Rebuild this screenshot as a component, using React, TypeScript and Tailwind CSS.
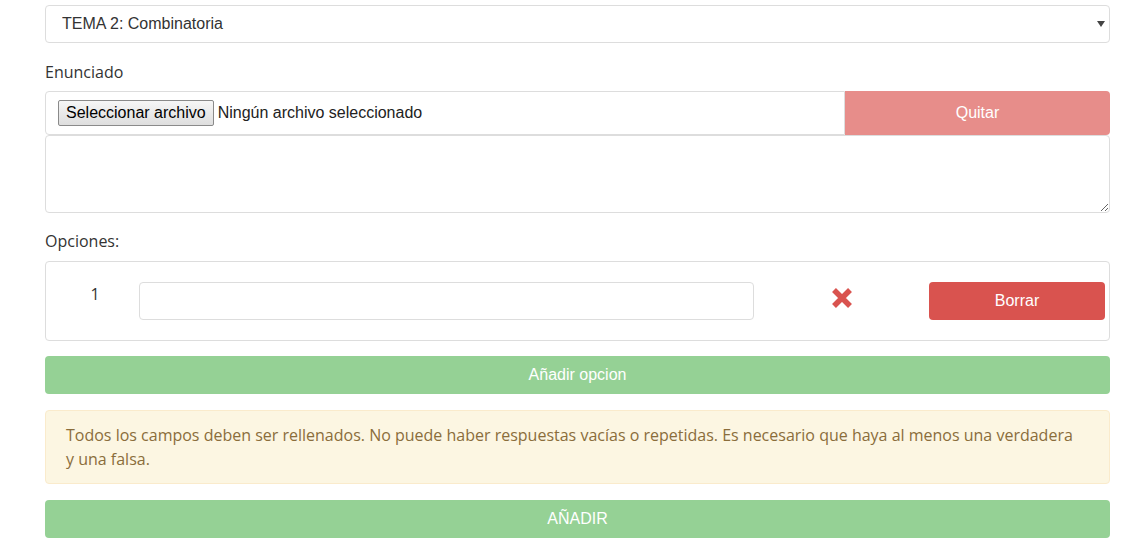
import React from 'react';

const sans = { fontFamily: '"Liberation Sans", Arial, sans-serif' };

const RemoveIcon = () => (
    <svg width="24" height="22" viewBox="0 0 24 22">
        <path d="M4 3 L20 19 M20 3 L4 19" stroke="#d9534f" strokeWidth="5.5" strokeLinecap="butt" />
    </svg>
);

const App = () => {
    return (
        <div className="w-[1146px] min-h-[559px] bg-white font-['Open_Sans',sans-serif] text-[#333]">
            <div className="ml-[45px] w-[1065px] pt-[5px]">
                <div className="relative">
                    <select
                        className="block h-[38px] w-full appearance-none rounded-[4px] border border-[#ddd] bg-white pl-[16px] text-[16px] text-[#333] outline-none"
                        style={sans}
                        defaultValue="t2"
                    >
                        <option value="t2">TEMA 2: Combinatoria</option>
                    </select>
                    <svg className="absolute right-[5px] top-[15px]" width="8" height="8" viewBox="0 0 8 8">
                        <path d="M0 1 L8 1 L4 7 Z" fill="#444" />
                    </svg>
                </div>

                <p className="mt-[17px] h-[24px] text-[16px] leading-[24px]">Enunciado</p>

                <div className="mt-[7px] flex h-[44px]">
                    <div className="flex flex-1 items-center rounded-l-[4px] border border-[#ddd] pl-[12px]" style={sans}>
                        <span className="flex h-[26px] items-center rounded-[2px] border border-[#8a8a8a] bg-gradient-to-b from-[#f6f6f6] to-[#dedede] px-[7px] text-[16px] text-black">
                            Seleccionar archivo
                        </span>
                        <span className="ml-[4px] text-[16px] text-[#222]">Ningún archivo seleccionado</span>
                    </div>
                    <button className="w-[265px] rounded-r-[4px] bg-[#e78d8a] text-[16px] text-white" style={sans}>
                        Quitar
                    </button>
                </div>

                <textarea className="block h-[78px] w-full rounded-[4px] border border-[#ddd] outline-none" />

                <p className="mt-[16px] h-[24px] text-[16px] leading-[24px]">Opciones:</p>

                <div className="mt-[8px] flex h-[80px] items-start rounded-[4px] border border-[#ddd] pt-[20px]">
                    <div className="w-[93px] pl-[5px] text-center text-[16px] leading-[24px]">1</div>
                    <input className="h-[38px] w-[615px] rounded-[4px] border border-[#ddd] outline-none" />
                    <div className="flex w-[175px] justify-center pt-[5px]">
                        <RemoveIcon />
                    </div>
                    <button className="h-[38px] w-[176px] rounded-[4px] bg-[#d9534f] text-[16px] text-white" style={sans}>
                        Borrar
                    </button>
                </div>

                <button className="mt-[15px] block h-[38px] w-full rounded-[4px] bg-[#95d195] text-[16px] text-white" style={sans}>
                    Añadir opcion
                </button>

                <div className="mt-[16px] rounded-[4px] border border-[#faebcc] bg-[#fcf6e2] pl-[20px] pr-[30px] py-[12px] text-[16px] leading-[24px] text-[#8a6d3b]">
                    Todos los campos deben ser rellenados. No puede haber respuestas vacías o repetidas. Es necesario que haya al menos una verdadera y una falsa.
                </div>

                <button className="mt-[16px] block h-[38px] w-full rounded-[4px] bg-[#95d195] text-[16px] text-white" style={sans}>
                    AÑADIR
                </button>
            </div>
        </div>
    );
};

export default App;
